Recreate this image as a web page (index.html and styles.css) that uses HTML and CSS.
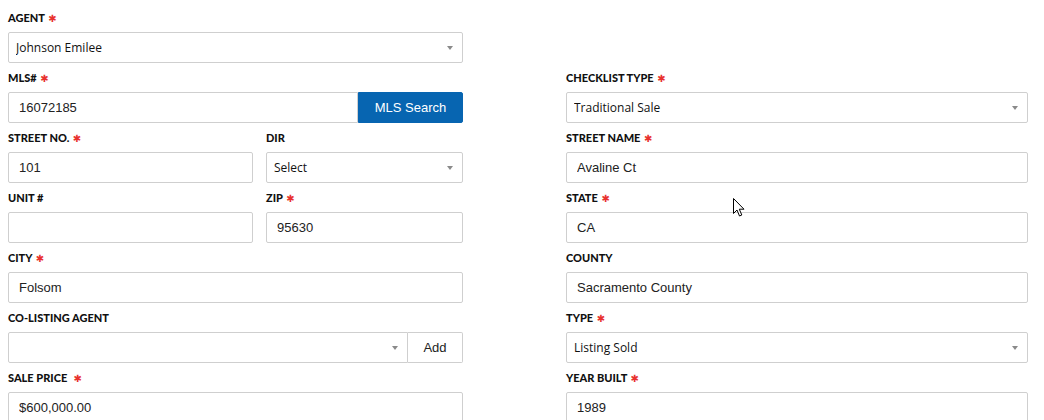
FILE: index.html
```html
<!DOCTYPE html>
<html>
<head>
    <title>Listing Details</title>
    <link rel="stylesheet" href="styles.css">
</head>
<body>

<form class="listing-form">
    <div class="field">
        <label>Agent <span class="req">&#10033;</span></label>
        <div class="select-wrap">
            <select><option>Johnson Emilee</option></select>
        </div>
    </div>
    <div class="field"></div>

    <div class="field">
        <label>MLS# <span class="req">&#10033;</span></label>
        <div class="input-group">
            <input type="text" value="16072185">
            <button type="button" class="btn-primary">MLS Search</button>
        </div>
    </div>
    <div class="field">
        <label>Checklist Type <span class="req">&#10033;</span></label>
        <div class="select-wrap">
            <select><option>Traditional Sale</option></select>
        </div>
    </div>

    <div class="split">
        <div class="field">
            <label>Street No. <span class="req">&#10033;</span></label>
            <input type="text" value="101">
        </div>
        <div class="field">
            <label>Dir</label>
            <div class="select-wrap">
                <select><option>Select</option></select>
            </div>
        </div>
    </div>
    <div class="field">
        <label>Street Name <span class="req">&#10033;</span></label>
        <input type="text" value="Avaline Ct">
    </div>

    <div class="split">
        <div class="field">
            <label>Unit #</label>
            <input type="text" value="">
        </div>
        <div class="field">
            <label>Zip <span class="req">&#10033;</span></label>
            <input type="text" value="95630">
        </div>
    </div>
    <div class="field">
        <label>State <span class="req">&#10033;</span></label>
        <input type="text" value="CA">
    </div>

    <div class="field">
        <label>City <span class="req">&#10033;</span></label>
        <input type="text" value="Folsom">
    </div>
    <div class="field">
        <label>County</label>
        <input type="text" value="Sacramento County">
    </div>

    <div class="field">
        <label>Co-Listing Agent</label>
        <div class="input-group">
            <div class="select-wrap">
                <select><option></option></select>
            </div>
            <button type="button" class="btn-default">Add</button>
        </div>
    </div>
    <div class="field">
        <label>Type <span class="req">&#10033;</span></label>
        <div class="select-wrap">
            <select><option>Listing Sold</option></select>
        </div>
    </div>

    <div class="field">
        <label>Sale Price &nbsp;<span class="req">&#10033;</span></label>
        <input type="text" value="$600,000.00">
    </div>
    <div class="field">
        <label>Year Built <span class="req">&#10033;</span></label>
        <input type="text" value="1989">
    </div>
</form>

<svg class="cursor" width="13" height="20" viewBox="0 0 13 20">
    <path d="M0.5 0.5 L0.5 15.5 L4 12 L6.5 18 L8.8 17 L6.3 11.2 L11 11.2 Z" fill="#fff" stroke="#000" stroke-width="1"/>
</svg>

</body>
</html>
```

FILE: styles.css
```css
body {
    margin: 0;
    background: #fff;
    font-family: "Liberation Sans", Arial, sans-serif;
    color: #222;
}

.listing-form {
    display: grid;
    grid-template-columns: 455px 462px;
    column-gap: 103px;
    padding: 3px 0 0 8px;
}

.field {
    display: flex;
    flex-direction: column;
}

.field label {
    display: block;
    height: 29px;
    box-sizing: border-box;
    padding-top: 8px;
    font-family: "Lato", sans-serif;
    font-weight: 900;
    font-size: 11px;
    line-height: 14px;
    text-transform: uppercase;
    color: #111;
    white-space: nowrap;
}

.req {
    color: #e8322f;
    font-family: "DejaVu Sans", sans-serif;
    font-size: 10px;
    line-height: 0;
    margin-left: 1px;
}

.split {
    display: grid;
    grid-template-columns: 245px 197px;
    column-gap: 13px;
}

input[type="text"], select {
    display: block;
    width: 100%;
    height: 31px;
    box-sizing: border-box;
    margin: 0;
    border: 1px solid #cfcfcf;
    border-radius: 2px;
    background: #fff;
    outline: none;
}

input[type="text"] {
    padding: 0 10px;
    font-family: "Liberation Sans", Arial, sans-serif;
    font-size: 13px;
    color: #222;
}

select {
    appearance: none;
    -webkit-appearance: none;
    padding: 0 24px 0 7px;
    font-family: "Open Sans", sans-serif;
    font-size: 12px;
    color: #111;
}

.select-wrap {
    position: relative;
    flex: 1;
}

.select-wrap::after {
    content: "";
    position: absolute;
    right: 10px;
    top: 14px;
    border-left: 3.5px solid transparent;
    border-right: 3.5px solid transparent;
    border-top: 4px solid #8a8a8a;
}

.input-group {
    display: flex;
}

.input-group input[type="text"] {
    flex: 1;
    border-radius: 2px 0 0 2px;
}

.input-group select {
    border-radius: 2px 0 0 2px;
}

.input-group button {
    height: 31px;
    margin: 0;
    font-family: "Liberation Sans", Arial, sans-serif;
    font-size: 13px;
    border-radius: 0 2px 2px 0;
    cursor: pointer;
}

.btn-primary {
    width: 105px;
    background: #0765b1;
    color: #fff;
    border: 1px solid #0765b1;
}

.btn-default {
    width: 55px;
    background: #fff;
    color: #222;
    border: 1px solid #cfcfcf;
    border-left: none;
}

.cursor {
    position: absolute;
    left: 733px;
    top: 198px;
}
```
